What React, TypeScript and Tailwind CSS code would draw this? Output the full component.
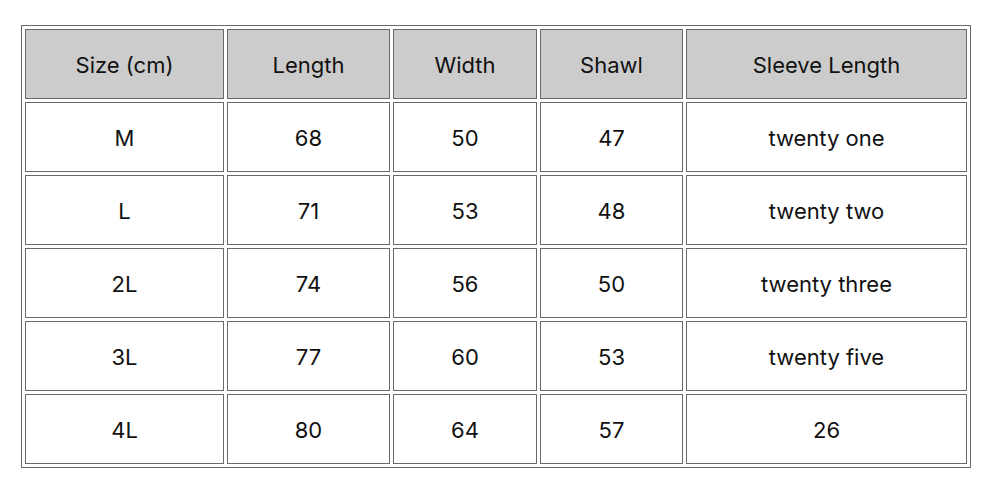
const headers = ["Size (cm)", "Length", "Width", "Shawl", "Sleeve Length"];

const rows = [
  ["M", "68", "50", "47", "twenty one"],
  ["L", "71", "53", "48", "twenty two"],
  ["2L", "74", "56", "50", "twenty three"],
  ["3L", "77", "60", "53", "twenty five"],
  ["4L", "80", "64", "57", "26"],
];

const widths = ["w-[199px]", "w-[163px]", "w-[144px]", "w-[143px]", "w-[281px]"];

export default function App() {
  return (
    <div
      className="w-[990px] h-[488px] bg-white pl-[21px] pt-[25px] text-[#111]"
      style={{ fontFamily: 'Inter, "Noto Sans CJK JP", sans-serif' }}
    >
      <table className="w-[950px] table-fixed border-separate border-spacing-[3px] border border-[#6a6a6a]">
        <thead>
          <tr>
            {headers.map((h, i) => (
              <th
                key={h}
                className={`${widths[i]} h-[70px] border border-[#6a6a6a] bg-[#cccccc] px-0 pt-[3px] pb-0 text-center align-middle text-[22px] font-normal`}
              >
                {h}
              </th>
            ))}
          </tr>
        </thead>
        <tbody>
          {rows.map((r) => (
            <tr key={r[0]}>
              {r.map((c, i) => (
                <td
                  key={i}
                  className="h-[70px] border border-[#6a6a6a] px-0 pt-[3px] pb-0 text-center align-middle text-[22px]"
                >
                  {c}
                </td>
              ))}
            </tr>
          ))}
        </tbody>
      </table>
    </div>
  );
}
